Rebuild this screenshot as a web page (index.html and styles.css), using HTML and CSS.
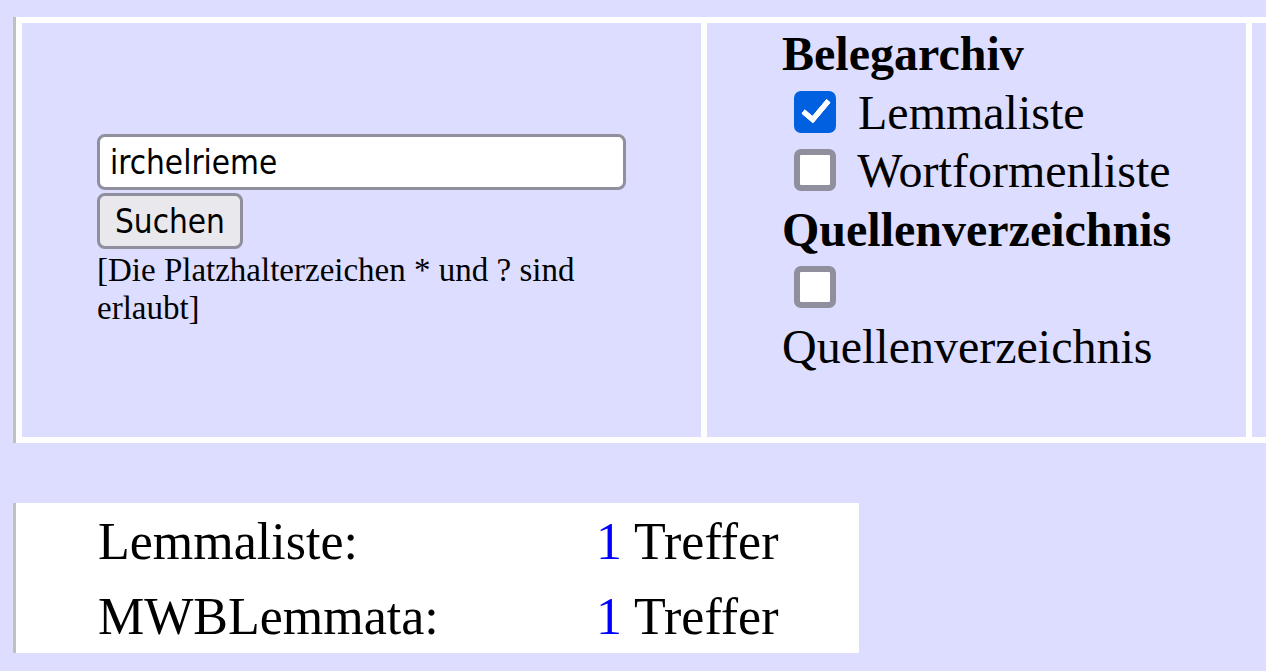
FILE: index.html
```html
<!DOCTYPE html>
<html lang="de">
<head>
  <meta charset="UTF-8">
  <meta name="viewport" content="width=device-width, initial-scale=1.0">
  <title>Suche</title>
  <link rel="stylesheet" href="styles.css">
</head>
<body>
  <div class="search-wrap">
    <table class="search">
      <tr>
        <td class="query">
          <form class="search-form">
            <input type="text" class="term" value="irchelrieme">
            <button type="submit" class="go">Suchen</button>
            <p class="hint">[Die Platzhalterzeichen * und ? sind erlaubt]</p>
          </form>
        </td>
        <td class="sources">
          <div class="group">Belegarchiv</div>
          <label class="opt"><input type="checkbox" checked> Lemmaliste</label>
          <label class="opt"><input type="checkbox"> Wortformenliste</label>
          <div class="group">Quellenverzeichnis</div>
          <label class="opt"><input type="checkbox"> Quellenverzeichnis</label>
        </td>
        <td class="extra"></td>
      </tr>
    </table>
  </div>

  <table class="results">
    <tr>
      <td class="label">Lemmaliste:</td>
      <td class="hits"><span class="count">1</span> Treffer</td>
    </tr>
    <tr>
      <td class="label">MWBLemmata:</td>
      <td class="hits"><span class="count">1</span> Treffer</td>
    </tr>
  </table>
</body>
</html>
```
FILE: styles.css
```css
:root {
  --page-bg: #ddf;
  --rule: #c0c0c0;
  --control-border: #8f8f9d;
  --accent: #0060df;
}
html, body { margin: 0; padding: 0; }
body { background: var(--page-bg); font-family: "Liberation Serif", "Times New Roman", serif; color: #000; }

/* Suchmaske */
.search-wrap { overflow: hidden; padding-top: 17px; }
.search { width: 1545px; table-layout: fixed; margin: 0 0 0 13px; border-left: 3px solid var(--rule); border-spacing: 6px; background: #fff; }
.search td { background: var(--page-bg); height: 414px; padding: 0 75px; }
.query { width: 529px; vertical-align: middle; }
.sources { width: 394px; padding-right: 70px !important; vertical-align: top; font-size: 48px; }
.extra { width: 300px; padding: 0 !important; }

.term, .go { display: block; box-sizing: border-box; height: 56px; border: 3px solid var(--control-border); border-radius: 8px; font-family: "DejaVu Sans", sans-serif; font-stretch: condensed; font-size: 33px; color: #000; margin: 0; }
.term { width: 100%; background: #fff; padding: 2px 10px 0; }
.go { background: #e9e9ed; padding: 2px 15px 0; margin-top: 3px; }
.hint { margin: 2px 0 0; font-size: 33px; line-height: 38px; }

.group { font-weight: bold; line-height: 58.5px; margin-top: 2px; }
.group ~ .group { margin-top: 0; }
.opt { display: block; line-height: 58.5px; }
.opt input {
  appearance: none;
  -webkit-appearance: none;
  box-sizing: border-box;
  width: 42px;
  height: 42px;
  margin: 0 10px 0 12px;
  vertical-align: -4px;
  background: #fff;
  border: 6px solid var(--control-border);
  border-radius: 7px;
  position: relative;
}
.opt input:checked { background: var(--accent); border-color: var(--accent); }
.opt input:checked::after {
  content: "";
  position: absolute;
  left: 8px;
  top: -3px;
  width: 10px;
  height: 22px;
  border-right: 6px solid #fff;
  border-bottom: 6px solid #fff;
  border-radius: 2px;
  transform: rotate(40deg);
}

/* Trefferliste */
.results { margin: 60px 0 0 13px; border-left: 3px solid var(--rule); border-spacing: 0; background: #fff; font-size: 52px; }
.results td { padding: 9px 0 7px; }
.results .label { width: 498px; padding-left: 82px; }
.results .hits { padding-right: 81px; white-space: nowrap; }
.count { color: #00f; }
```
